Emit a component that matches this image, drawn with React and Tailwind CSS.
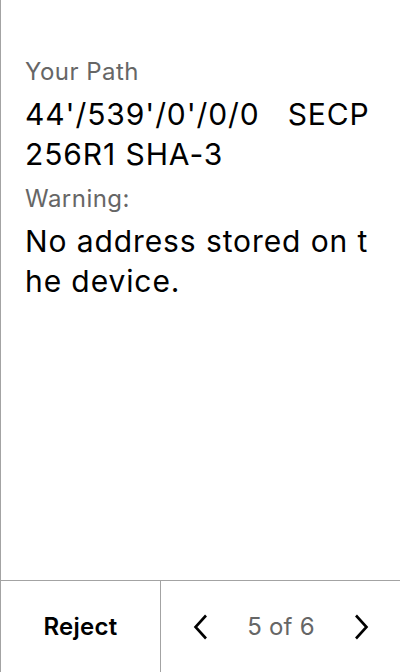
import React from 'react'

const ChevronLeft = () => (
  <svg width="16" height="26" viewBox="0 0 16 26" fill="none">
    <path d="M13 1.5 L2.5 13 L13 24.5" stroke="#000" strokeWidth="2.6" />
  </svg>
)

const ChevronRight = () => (
  <svg width="16" height="26" viewBox="0 0 16 26" fill="none">
    <path d="M3 1.5 L13.5 13 L3 24.5" stroke="#000" strokeWidth="2.6" />
  </svg>
)

const App = () => {
  return (
    <main className="w-[400px] h-[672px] flex flex-col bg-white border-l border-[#a3a3a3] font-['Inter',sans-serif]">
      <div className="flex-1 pl-6 pr-6 pt-[58px] flex flex-col gap-[11px]">
        <div className="flex flex-col gap-2">
          <p className="text-[24px] leading-[28px] tracking-[0.02em] text-[#666]">Your Path</p>
          <p className="text-[30px] leading-[40px] tracking-[0.03em] text-black break-all whitespace-pre-wrap">{"44'/539'/0'/0/0   SECP256R1 SHA-3"}</p>
        </div>
        <div className="flex flex-col gap-2">
          <p className="text-[24px] leading-[28px] tracking-[0.02em] text-[#666]">Warning:</p>
          <p className="text-[30px] leading-[40px] tracking-[0.03em] text-black break-all">No address stored on the device.</p>
        </div>
      </div>
      <div className="h-[92px] flex border-t border-[#a3a3a3]">
        <button className="w-[159px] flex items-center justify-center text-[24px] tracking-[0.01em] font-semibold text-black">Reject</button>
        <div className="flex-1 flex items-center justify-between border-l border-[#a3a3a3] pl-[32px] pr-[31px]">
          <ChevronLeft />
          <span className="text-[24px] tracking-[0.01em] text-[#666]">5 of 6</span>
          <ChevronRight />
        </div>
      </div>
    </main>
  )
}

export default App
